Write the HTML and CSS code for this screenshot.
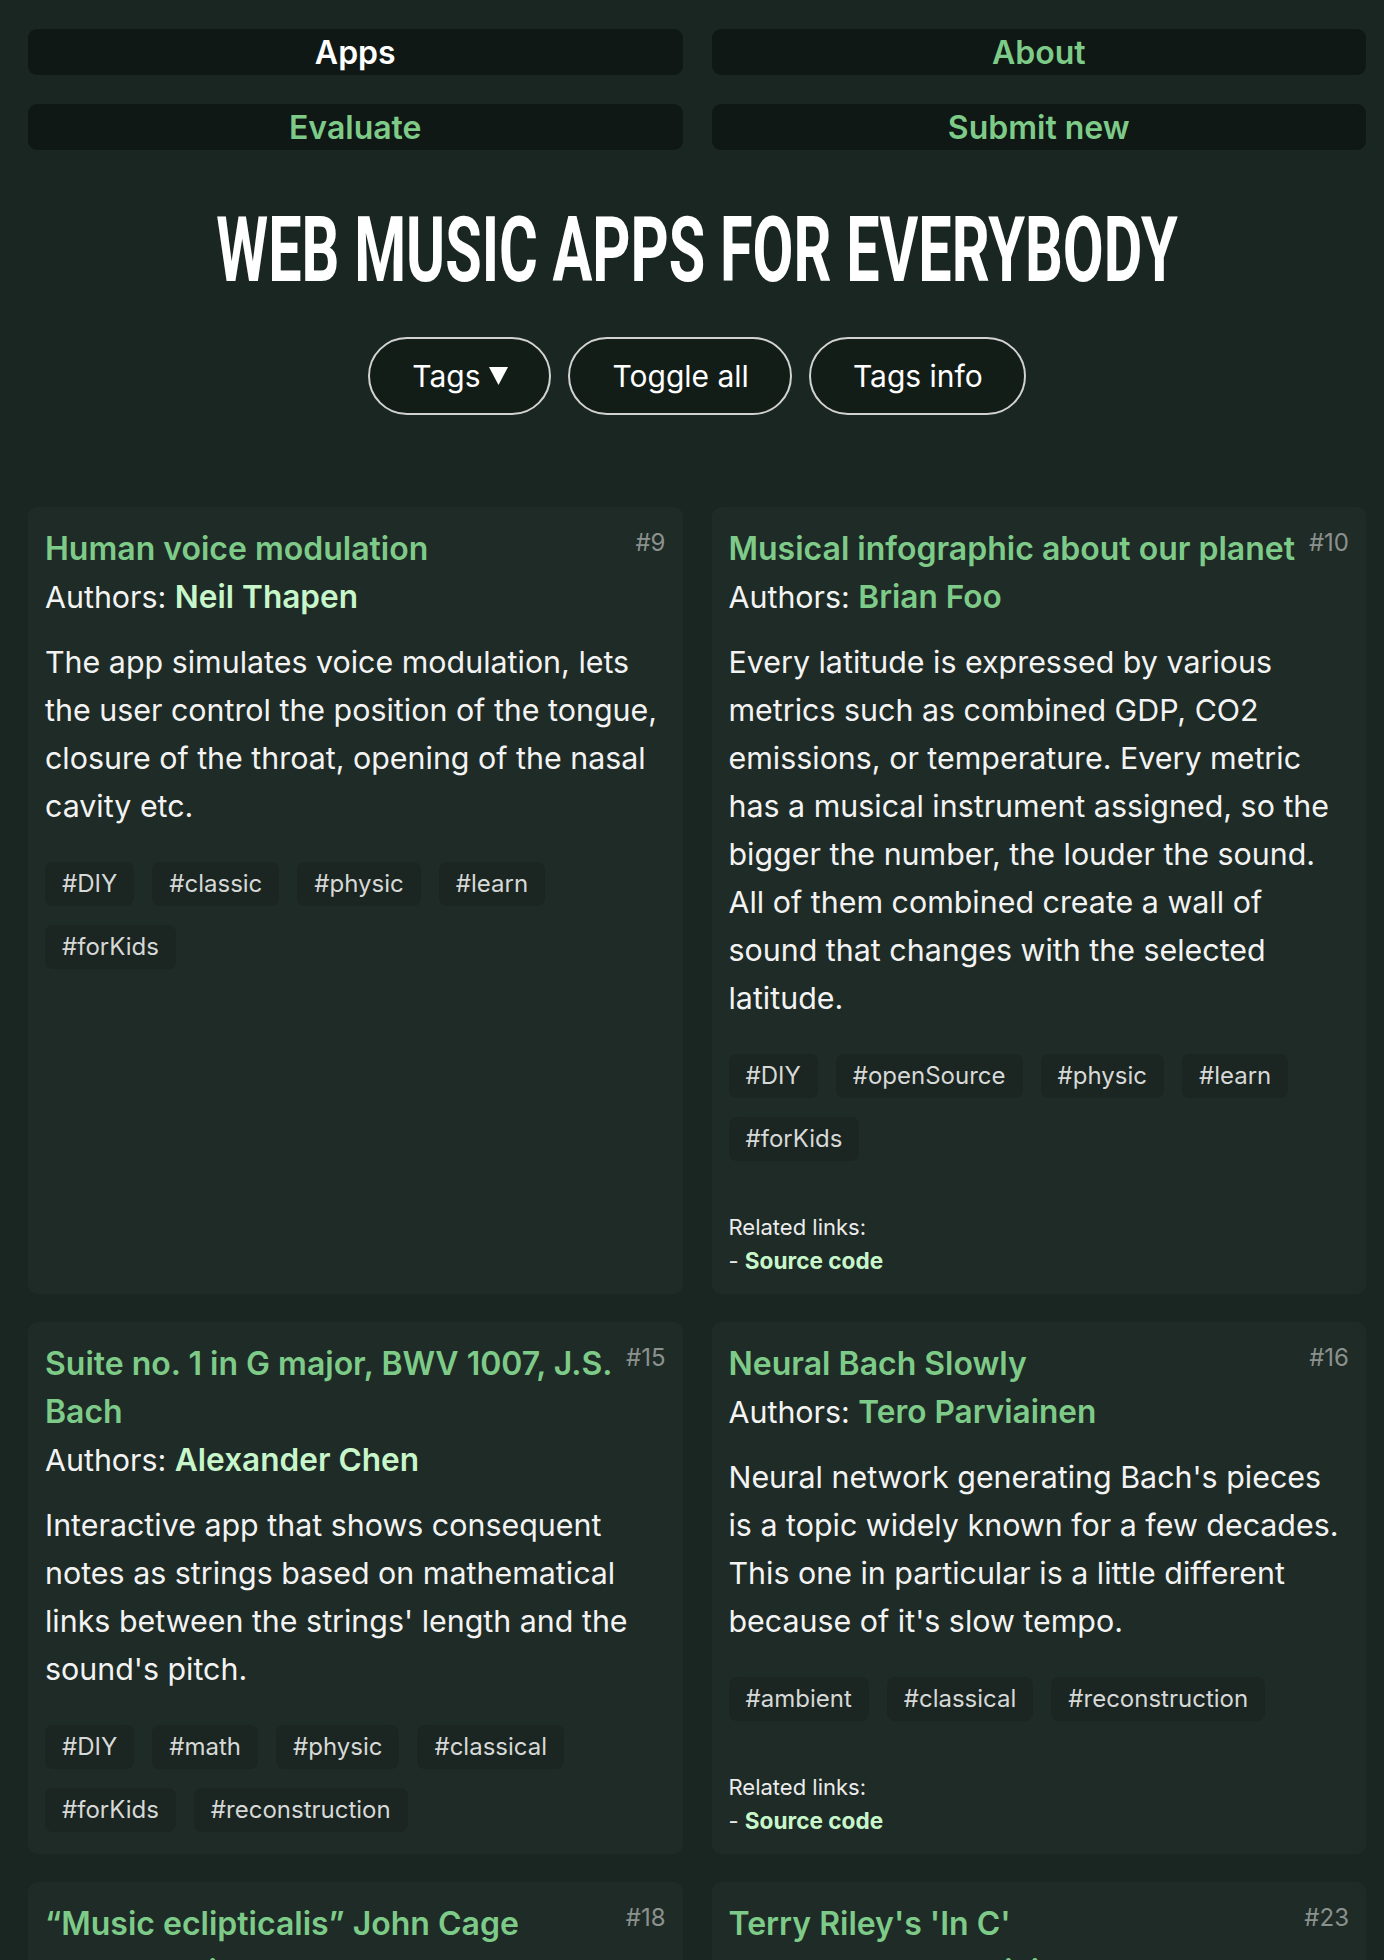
FILE: index.html
```html
<!DOCTYPE html>
<html lang="en">
<head>
<meta charset="utf-8">
<title>Web Music Apps for Everybody</title>
<link rel="stylesheet" href="styles.css">
</head>
<body>
<div class="page">
  <nav class="nav">
    <a class="nav-link active" href="#">Apps</a>
    <a class="nav-link" href="#">About</a>
    <a class="nav-link" href="#">Evaluate</a>
    <a class="nav-link" href="#">Submit new</a>
  </nav>

  <header class="hero">
    <h1 class="hero-title">WEB MUSIC APPS FOR EVERYBODY</h1>
  </header>

  <div class="controls">
    <button class="pill">Tags <svg class="tri" width="19" height="18" viewBox="0 0 19 18"><polygon points="0,0 19,0 9.5,18" fill="#fff"/></svg></button>
    <button class="pill">Toggle all</button>
    <button class="pill">Tags info</button>
  </div>

  <main class="cards">
    <article class="card">
      <div class="card-head">
        <h2 class="card-title">Human voice modulation</h2>
        <span class="card-num">#9</span>
      </div>
      <div class="authors">Authors: <a class="author visited" href="#">Neil Thapen</a></div>
      <p class="desc">The app simulates voice modulation, lets the user control the position of the tongue, closure of the throat, opening of the nasal cavity etc.</p>
      <div class="tags">
        <span class="tag">#DIY</span><span class="tag">#classic</span><span class="tag">#physic</span><span class="tag">#learn</span><span class="tag">#forKids</span>
      </div>
    </article>

    <article class="card">
      <div class="card-head">
        <h2 class="card-title">Musical infographic about our planet</h2>
        <span class="card-num">#10</span>
      </div>
      <div class="authors">Authors: <a class="author" href="#">Brian Foo</a></div>
      <p class="desc">Every latitude is expressed by various metrics such as combined GDP, CO2 emissions, or temperature. Every metric has a musical instrument assigned, so the bigger the number, the louder the sound. All of them combined create a wall of sound that changes with the selected latitude.</p>
      <div class="tags">
        <span class="tag">#DIY</span><span class="tag">#openSource</span><span class="tag">#physic</span><span class="tag">#learn</span><span class="tag">#forKids</span>
      </div>
      <div class="related">
        <div>Related links:</div>
        <div>- <a href="#">Source code</a></div>
      </div>
    </article>

    <article class="card">
      <div class="card-head">
        <h2 class="card-title">Suite no. 1 in G major, BWV 1007, J.S. Bach</h2>
        <span class="card-num">#15</span>
      </div>
      <div class="authors">Authors: <a class="author visited" href="#">Alexander Chen</a></div>
      <p class="desc">Interactive app that shows consequent notes as strings based on mathematical links between the strings' length and the sound's pitch.</p>
      <div class="tags">
        <span class="tag">#DIY</span><span class="tag">#math</span><span class="tag">#physic</span><span class="tag">#classical</span><span class="tag">#forKids</span><span class="tag">#reconstruction</span>
      </div>
    </article>

    <article class="card">
      <div class="card-head">
        <h2 class="card-title">Neural Bach Slowly</h2>
        <span class="card-num">#16</span>
      </div>
      <div class="authors">Authors: <a class="author" href="#">Tero Parviainen</a></div>
      <p class="desc">Neural network generating Bach's pieces is a topic widely known for a few decades. This one in particular is a little different because of it's slow tempo.</p>
      <div class="tags">
        <span class="tag">#ambient</span><span class="tag">#classical</span><span class="tag">#reconstruction</span>
      </div>
      <div class="related">
        <div>Related links:</div>
        <div>- <a href="#">Source code</a></div>
      </div>
    </article>

    <article class="card">
      <div class="card-head">
        <h2 class="card-title">“Music eclipticalis” John Cage</h2>
        <span class="card-num">#18</span>
      </div>
      <div class="authors">Authors: <a class="author" href="#">Brian Foo</a></div>
      <p class="desc">A musical piece generated from star charts, where every star becomes a note placed on the staff.</p>
      <div class="tags">
        <span class="tag">#ambient</span><span class="tag">#classical</span>
      </div>
    </article>

    <article class="card">
      <div class="card-head">
        <h2 class="card-title">Terry Riley's 'In C'</h2>
        <span class="card-num">#23</span>
      </div>
      <div class="authors">Authors: <a class="author" href="#">Tero Parviainen</a></div>
      <p class="desc">A web interpretation of the famous minimalist composition, played by a group of virtual performers.</p>
      <div class="tags">
        <span class="tag">#ambient</span><span class="tag">#reconstruction</span>
      </div>
    </article>
  </main>
</div>
</body>
</html>
```
FILE: styles.css
```css
html {
  scrollbar-width: none;
}

body {
  margin: 0;
  background: #1a2621;
  font-family: Inter, "Noto Sans", sans-serif;
  color: #f3f3f3;
}

.page {
  padding: 29px 18px 40px 28px;
}

/* top navigation */
.nav {
  display: grid;
  grid-template-columns: 1fr 1fr;
  gap: 29px;
}

.nav-link {
  height: 46px;
  display: flex;
  align-items: center;
  justify-content: center;
  background: #0f1814;
  border-radius: 9px;
  font-size: 32px;
  font-weight: 600;
  color: #7ecb89;
  text-decoration: none;
}

.nav-link.active {
  color: #ffffff;
}

/* hero title: a condensed display face, approximated by stretching a
   narrower setting vertically */
.hero {
  display: flex;
  justify-content: center;
  margin-top: 70px;
}

.hero-title {
  margin: 0;
  font-family: Roboto, "Liberation Sans", sans-serif;
  font-weight: 700;
  font-size: 59.3px;
  line-height: 59.3px;
  color: #ffffff;
  white-space: nowrap;
  transform: scaleY(1.535);
}

/* control pills */
.controls {
  display: flex;
  justify-content: center;
  gap: 17px;
  margin-top: 58px;
}

.pill {
  height: 78px;
  box-sizing: border-box;
  border: 2px solid #d2d2d2;
  border-radius: 40px;
  background: #131d18;
  color: #ffffff;
  font-family: Inter, "Noto Sans", sans-serif;
  font-size: 30px;
  font-weight: 400;
  padding: 0 41px 0 42px;
  display: flex;
  align-items: center;
  gap: 9px;
}

.tri {
  display: block;
}

/* cards */
.cards {
  display: grid;
  grid-template-columns: 1fr 1fr;
  gap: 28px 29px;
  margin-top: 92px;
}

.card {
  background: #1f2b26;
  border-radius: 9px;
  padding: 18px 17px 16px;
}

.card-head {
  display: flex;
  align-items: flex-start;
}

.card-title {
  flex: 1;
  margin: 0;
  font-size: 32px;
  line-height: 48px;
  font-weight: 600;
  color: #7ecb89;
}

.card-num {
  margin-left: 10px;
  font-size: 24px;
  line-height: 36px;
  color: #8b918e;
}

.authors {
  font-size: 30.4px;
  line-height: 47px;
}

.author {
  color: #7ecb89;
  font-size: 31.6px;
  font-weight: 600;
  text-decoration: none;
}

.author.visited {
  color: #c8f6cb;
}

.desc {
  margin: 17px 0 0;
  font-size: 30.4px;
  line-height: 48px;
}

.tags {
  display: flex;
  flex-wrap: wrap;
  gap: 19px 18px;
  margin-top: 32px;
}

.tag {
  background: #1b2521;
  border-radius: 8px;
  padding: 7px 17px;
  font-size: 24px;
  line-height: 30px;
  color: #d6d9d7;
}

.related {
  margin-top: 50px;
  font-size: 22px;
  line-height: 33px;
  color: #ececec;
}

.related a {
  color: #c8f6cb;
  font-weight: 700;
  font-size: 22.6px;
  text-decoration: none;
}
```
